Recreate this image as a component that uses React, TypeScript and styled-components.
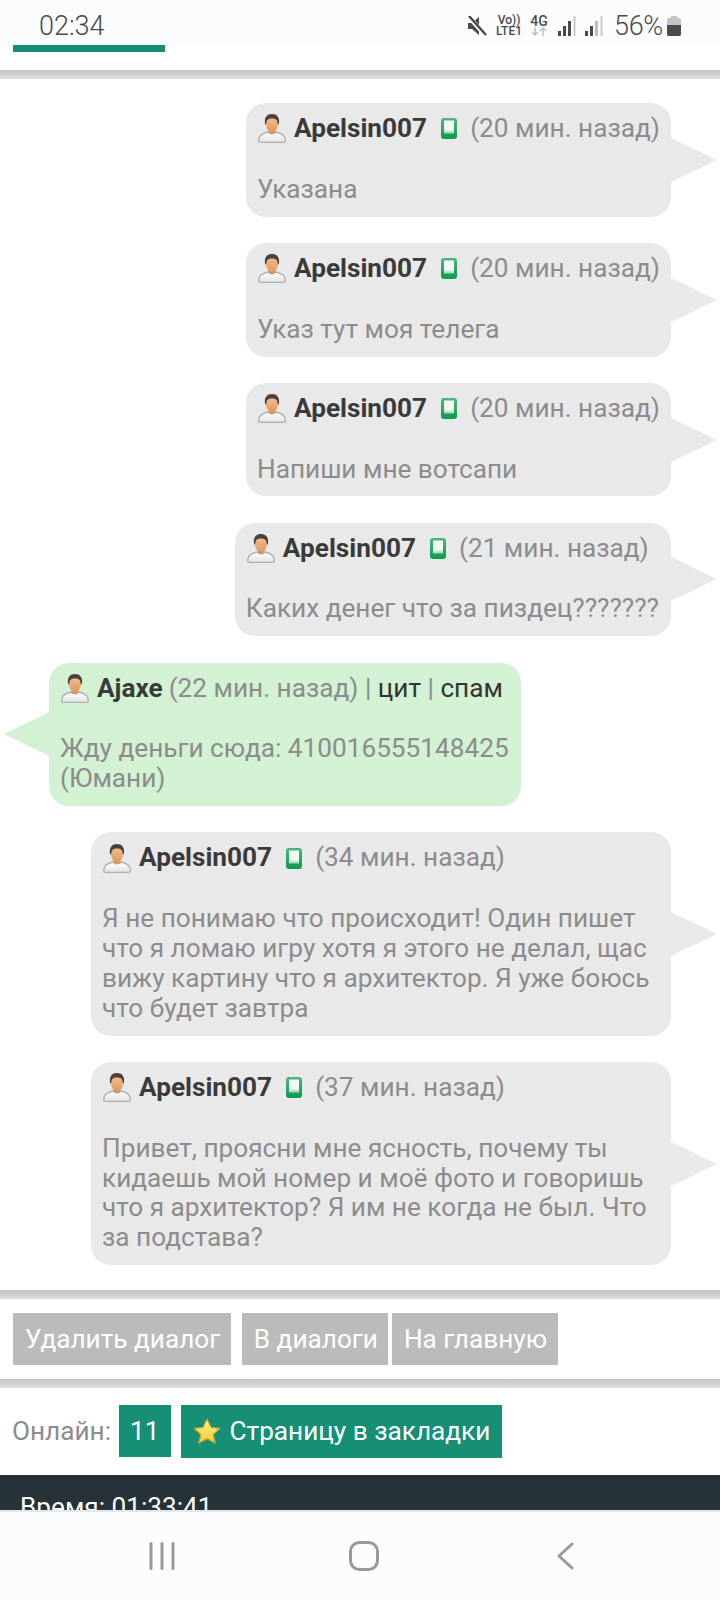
import React from "react";
import styled, { createGlobalStyle } from "styled-components";

const GlobalStyle = createGlobalStyle`
  html, body {
    margin: 0;
    padding: 0;
    background: #fff;
  }
  body {
    font-family: Roboto, "Liberation Sans", sans-serif;
  }
`;

const Screen = styled.div`
  width: 720px;
  height: 1600px;
  display: flex;
  flex-direction: column;
  overflow: hidden;
`;

const StatusBar = styled.div`
  flex: none;
  height: 44px;
  background: #fbfcfe;
  display: flex;
  align-items: center;
  color: #4a4a4a;
  padding: 8px 39px 0 39px;
  box-sizing: border-box;
`;

const Clock = styled.div`
  font-size: 27px;
  font-weight: 300;
  flex: 1;
`;

const StatusIcons = styled.div`
  display: flex;
  align-items: center;
`;

const StackedLabel = styled.div<{ $left: number; $size: number }>`
  display: flex;
  flex-direction: column;
  align-items: center;
  font-size: ${(p) => p.$size}px;
  font-weight: 500;
  line-height: 11px;
  margin-left: ${(p) => p.$left}px;
  color: #4a4a4a;
`;

const Percent = styled.span`
  font-size: 27px;
  font-weight: 300;
  margin-left: 11px;
  letter-spacing: -0.3px;
`;

const SignalMark = styled.svg<{ $left: number }>`
  margin-left: ${(p) => p.$left}px;
`;

const BatteryMark = styled.svg`
  margin-left: 4px;
`;

const Content = styled.div`
  flex: 1;
  min-height: 0;
  overflow: hidden;
`;

const Header = styled.div`
  height: 25px;
  padding-left: 13px;
`;

const ProgressBar = styled.div`
  width: 152px;
  height: 7px;
  margin-top: 1px;
  background: #159075;
`;

const ShadowBand = styled.div`
  height: 9px;
  background: linear-gradient(#c4c4c4, #dedede);
`;

const Messages = styled.div`
  display: flex;
  flex-direction: column;
  align-items: flex-end;
  gap: 26.2px;
  padding: 24px 49px 24.300px;
`;

const Bubble = styled.div<{ $mine: boolean; $max: number }>`
  position: relative;
  box-sizing: border-box;
  max-width: ${(p) => p.$max}px;
  padding: 12px ${(p) => (p.$mine ? 12 : 11)}px 12px 11px;
  border-radius: 20px;
  font-size: 26.2px;
  line-height: 29.9px;
  color: #8c8c8c;
  background: ${(p) => (p.$mine ? "#e9e9e9" : "#d3f1d3")};
  align-self: ${(p) => (p.$mine ? "flex-end" : "flex-start")};

  &::after {
    content: "";
    position: absolute;
    top: 50%;
    transform: translateY(-50%);
    ${(p) => (p.$mine ? "left: 100%;" : "right: 100%;")}
    border-style: solid;
    border-width: 22px 0;
    border-color: transparent;
    ${(p) =>
      p.$mine
        ? "border-left: 46px solid #e9e9e9; border-right: 0;"
        : "border-right: 45px solid #d3f1d3; border-left: 0;"}
  }
`;

const MessageHead = styled.div`
  display: flex;
  align-items: center;
  white-space: nowrap;
  margin-top: -1px;
  margin-bottom: 30.9px;
  height: 29.9px;
`;

const AvatarMark = styled.svg`
  flex: none;
  margin-left: 1px;
`;

const Name = styled.b`
  color: #3a3a3a;
  font-weight: 700;
  margin-left: 8px;
`;

const Ago = styled.span<{ $gap: number }>`
  margin-left: ${(p) => p.$gap}px;
  white-space: pre;
`;

const Action = styled.span`
  color: #333;
`;

const PhoneMark = styled.svg`
  flex: none;
  margin-left: 14px;
`;

const MessageText = styled.div``;

const ButtonRow = styled.div`
  display: flex;
  padding: 14px 13px;
`;

const GreyButton = styled.div<{ $gap: number }>`
  height: 52px;
  display: flex;
  align-items: center;
  padding: 0 10.500px 0 12px;
  margin-right: ${(p) => p.$gap}px;
  background: #bbb;
  color: #fff;
  font-size: 26.2px;
`;

const OnlineRow = styled.div`
  display: flex;
  align-items: flex-start;
  padding: 17px 12px;
  color: #8c8c8c;
  font-size: 26.2px;
  height: 53px;
`;

const OnlineLabel = styled.span`
  line-height: 52px;
  margin-right: 8px;
`;

const GreenChip = styled.div`
  display: flex;
  align-items: center;
  height: 52px;
  padding: 0 11px;
  color: #fff;
  background: #159075;
`;

const BookmarkChip = styled(GreenChip)`
  height: 53px;
  margin-left: 10px;
  padding: 0 12px;
  gap: 9px;
`;

const StarMark = styled.svg`
  flex: none;
`;

const Footer = styled.div`
  background: #263238;
  color: #fff;
  font-size: 26.2px;
  line-height: 30px;
  padding: 17px 20px 10px;
  height: 120px;
`;

const NavBar = styled.div`
  flex: none;
  height: 88px;
  background: #fbfcfe;
  border-top: 2px solid #e3e8ec;
  padding-left: 149px;
  display: grid;
  grid-template-columns: 200px 207px 1fr;
  align-items: center;
`;

function Avatar() {
  return (
    <AvatarMark width="28" height="29" viewBox="0 0 28 29">
      <defs>
        <linearGradient id="shirt" x1="0" y1="0" x2="0" y2="1">
          <stop offset="0" stopColor="#ffffff" />
          <stop offset="1" stopColor="#e2e2e2" />
        </linearGradient>
        <linearGradient id="skin" x1="0" y1="0" x2="0" y2="1">
          <stop offset="0" stopColor="#f6c08e" />
          <stop offset="1" stopColor="#dd9a62" />
        </linearGradient>
      </defs>
      <path d="M1 28c-1-6 2-8 9-10l4 2 4-2c7 2 10 4 9 10-1 .7-25 .7-26 0z" fill="url(#shirt)" stroke="#b0b0b0" strokeWidth="1.400" />
      <rect x="10.500" y="14" width="7" height="6" rx="2" fill="#d7965f" />
      <ellipse cx="14" cy="10" rx="6" ry="8" fill="url(#skin)" />
      <path d="M7.300 11C5.500 3 9.500 0 14 0s8.500 3 6.700 11l-1.200-2C19.500 6 18 4.500 14 4.500S8.500 6 8.500 9z" fill="#4a403c" />
    </AvatarMark>
  );
}

function Phone() {
  return (
    <PhoneMark width="16" height="21" viewBox="0 0 16 21">
      <defs>
        <linearGradient id="phoneBody" x1="0" y1="0" x2="0" y2="1">
          <stop offset="0" stopColor="#4fb583" />
          <stop offset="1" stopColor="#0c9a50" />
        </linearGradient>
        <linearGradient id="phoneScreen" x1="0" y1="0" x2="0" y2="1">
          <stop offset="0" stopColor="#f6faf6" />
          <stop offset="0.7" stopColor="#f0f8f2" />
          <stop offset="1" stopColor="#8fd4ad" />
        </linearGradient>
      </defs>
      <rect x="0" y="0" width="16" height="21" rx="3" fill="url(#phoneBody)" />
      <rect x="3" y="2.500" width="10" height="13" fill="url(#phoneScreen)" />
    </PhoneMark>
  );
}

function Star() {
  return (
    <StarMark width="28" height="27" viewBox="0 0 28 27">
      <defs>
        <linearGradient id="starFill" x1="0" y1="0" x2="0" y2="1">
          <stop offset="0" stopColor="#fdf39a" />
          <stop offset="1" stopColor="#efcb1e" />
        </linearGradient>
      </defs>
      <path
        d="M14 1l4 8.300 9 1.100-6.700 6 2 8.900L14 20.800l-8.300 4.500 2-8.900L1 10.400l9-1.100z"
        fill="url(#starFill)"
        stroke="#b9a53a"
        strokeWidth="1.200"
        strokeLinejoin="round"
      />
    </StarMark>
  );
}

function SignalIcon({ left, third }: { left: number; third: string }) {
  return (
    <SignalMark $left={left} width="18" height="20" viewBox="0 0 18 20">
      <rect x="0" y="15" width="3" height="5" fill="#4a4a4a" />
      <rect x="5" y="10" width="3" height="10" fill="#4a4a4a" />
      <rect x="10" y="5" width="3" height="15" fill={third} />
      <rect x="15.500" y="0" width="2" height="20" fill="#c9c9c9" />
    </SignalMark>
  );
}

type Message = {
  name: string;
  ago: string;
  text: string;
  max: number;
  mine?: boolean;
};

const messages: Message[] = [
  { name: "Apelsin007", ago: "(20 мин. назад)", text: "Указана", max: 425, mine: true },
  { name: "Apelsin007", ago: "(20 мин. назад)", text: "Указ тут моя телега", max: 425, mine: true },
  { name: "Apelsin007", ago: "(20 мин. назад)", text: "Напиши мне вотсапи", max: 425, mine: true },
  { name: "Apelsin007", ago: "(21 мин. назад)", text: "Каких денег что за пиздец???????", max: 440, mine: true },
  { name: "Ajaxe", ago: "(22 мин. назад)", text: "Жду деньги сюда: 410016555148425 (Юмани)", max: 472 },
  {
    name: "Apelsin007",
    ago: "(34 мин. назад)",
    text: "Я не понимаю что происходит! Один пишет что я ломаю игру хотя я этого не делал, щас вижу картину что я архитектор. Я уже боюсь что будет завтра",
    max: 580,
    mine: true,
  },
  {
    name: "Apelsin007",
    ago: "(37 мин. назад)",
    text: "Привет, проясни мне ясность, почему ты кидаешь мой номер и моё фото и говоришь что я архитектор? Я им не когда не был. Что за подстава?",
    max: 580,
    mine: true,
  },
];

export default function App() {
  return (
    <>
      <GlobalStyle />
      <Screen>
        <StatusBar>
          <Clock>02:34</Clock>
          <StatusIcons>
            <svg width="20" height="20" viewBox="0 0 20 20">
              <path d="M1 7h4l7-6v18l-7-6H1z" fill="#4a4a4a" />
              <path d="M1 0l18 20" stroke="#fbfcfe" strokeWidth="4.500" />
              <path d="M2 0l17 19" stroke="#4a4a4a" strokeWidth="2.400" />
            </svg>
            <StackedLabel $left={9} $size={12}>
              <span>Vo))</span>
              <span>LTE1</span>
            </StackedLabel>
            <StackedLabel $left={8} $size={14}>
              <span>4G</span>
              <svg width="18" height="9" viewBox="0 0 18 9">
                <path d="M5 0v8M2 5l3 3 3-3" stroke="#bdbdbd" strokeWidth="1.400" fill="none" />
                <path d="M13 9V1M10 4l3-3 3 3" stroke="#bdbdbd" strokeWidth="1.400" fill="none" />
              </svg>
            </StackedLabel>
            <SignalIcon left={10} third="#4a4a4a" />
            <SignalIcon left={9} third="#bdbdbd" />
            <Percent>56%</Percent>
            <BatteryMark width="14" height="20" viewBox="0 0 14 20">
              <path d="M4 0h6v2h2a2 2 0 0 1 2 2v14a2 2 0 0 1-2 2H2a2 2 0 0 1-2-2V4a2 2 0 0 1 2-2h2z" fill="#c4c4c4" />
              <path d="M0 9h14v9a2 2 0 0 1-2 2H2a2 2 0 0 1-2-2z" fill="#4a4a4a" />
            </BatteryMark>
          </StatusIcons>
        </StatusBar>

        <Content>
          <Header>
            <ProgressBar />
          </Header>
          <ShadowBand />

          <Messages>
            {messages.map((m, i) => (
              <Bubble key={i} $mine={!!m.mine} $max={m.max}>
                <MessageHead>
                  <Avatar />
                  <Name>{m.name}</Name>
                  {m.mine ? (
                    <>
                      <Phone />
                      <Ago $gap={13}>{m.ago}</Ago>
                    </>
                  ) : (
                    <Ago $gap={6}>
                      {m.ago} | <Action>цит</Action> | <Action>спам</Action>
                    </Ago>
                  )}
                </MessageHead>
                <MessageText>{m.text}</MessageText>
              </Bubble>
            ))}
          </Messages>

          <ShadowBand />
          <ButtonRow>
            <GreyButton $gap={11}>Удалить диалог</GreyButton>
            <GreyButton $gap={3.5}>В диалоги</GreyButton>
            <GreyButton $gap={0}>На главную</GreyButton>
          </ButtonRow>
          <ShadowBand />
          <OnlineRow>
            <OnlineLabel>Онлайн:</OnlineLabel>
            <GreenChip>11</GreenChip>
            <BookmarkChip>
              <Star />
              Страницу в закладки
            </BookmarkChip>
          </OnlineRow>
          <Footer>Время: 01:33:41</Footer>
        </Content>

        <NavBar>
          <svg width="26" height="28" viewBox="0 0 26 28">
            <path d="M2 1.500v25M13 1.500v25M24 1.500v25" stroke="#999" strokeWidth="3" strokeLinecap="round" />
          </svg>
          <svg width="30" height="30" viewBox="0 0 30 30">
            <rect x="1.500" y="1.500" width="27" height="27" rx="9" fill="none" stroke="#999" strokeWidth="3" />
          </svg>
          <svg width="18" height="28" viewBox="0 0 18 28">
            <path d="M16 2L3 14l13 12" fill="none" stroke="#999" strokeWidth="3" strokeLinecap="round" strokeLinejoin="round" />
          </svg>
        </NavBar>
      </Screen>
    </>
  );
}
